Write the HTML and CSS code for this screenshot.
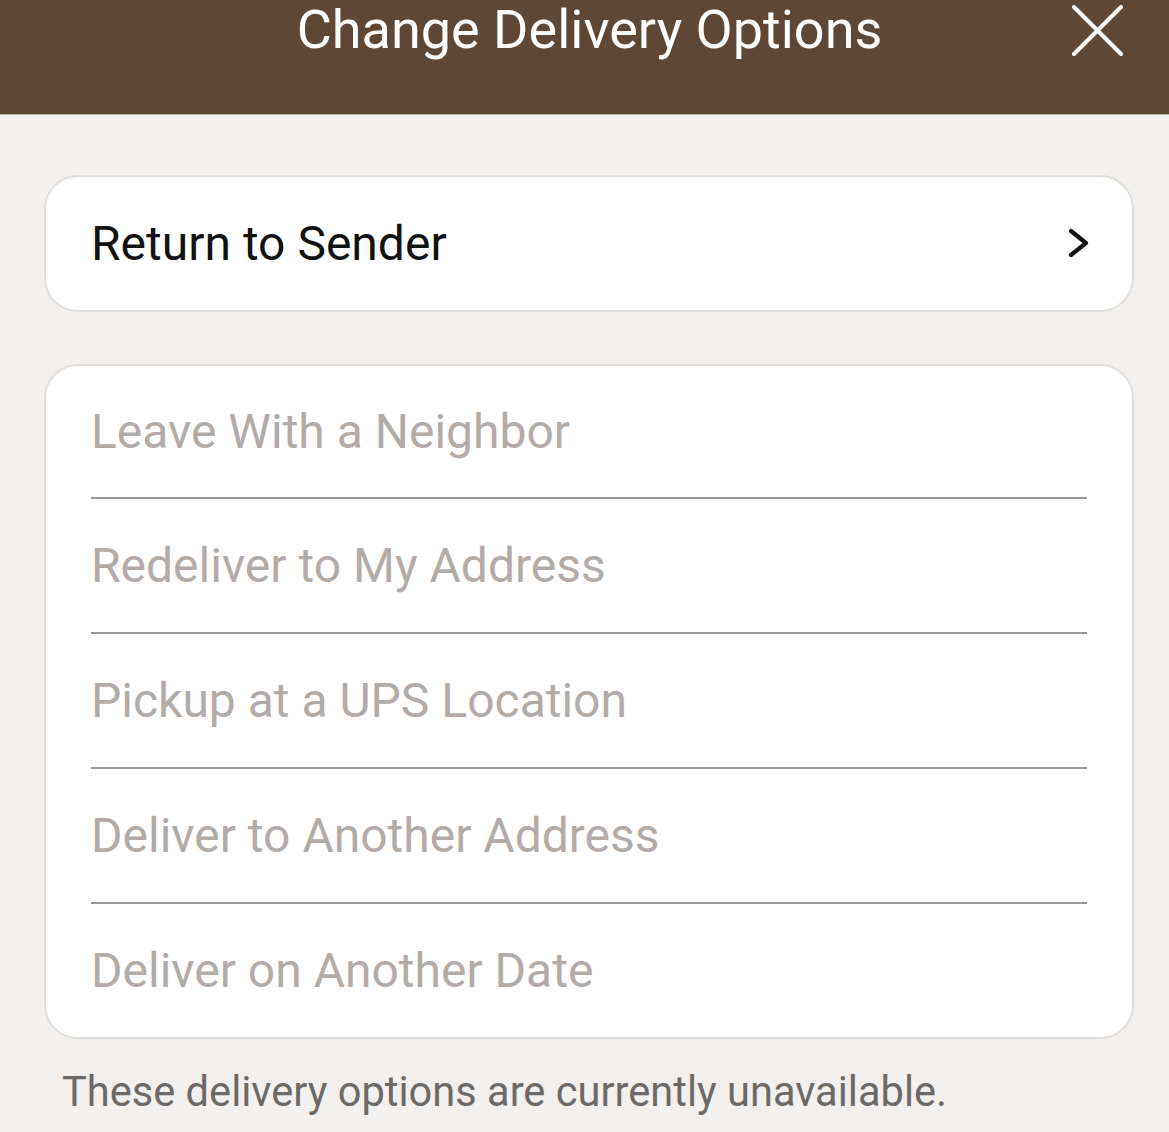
FILE: index.html
```html
<!DOCTYPE html>
<html lang="en">
<head>
    <meta charset="UTF-8">
    <meta name="viewport" content="width=device-width, initial-scale=1.0">
    <title>Change Delivery Options</title>
    <link rel="stylesheet" href="styles.css">
</head>
<body>
    <div id="header">
        <div id="headerTitle">Change Delivery Options</div>
        <button id="closeButton" aria-label="Close">
            <svg width="52" height="52" viewBox="0 0 52 52">
                <path d="M3 2 L50 49 M50 2 L3 49" stroke="#fff" stroke-width="4" stroke-linecap="round" fill="none"/>
            </svg>
        </button>
    </div>

    <div id="content">
        <div class="card">
            <div class="option active">
                <span>Return to Sender</span>
                <svg class="chevron" width="24" height="32" viewBox="0 0 24 32">
                    <path d="M5 3 L20 15 L5 27" stroke="#111" stroke-width="4.2" stroke-linecap="round" stroke-linejoin="round" fill="none"/>
                </svg>
            </div>
        </div>

        <div class="card">
            <div class="option disabled">Leave With a Neighbor</div>
            <div class="option disabled">Redeliver to My Address</div>
            <div class="option disabled">Pickup at a UPS Location</div>
            <div class="option disabled">Deliver to Another Address</div>
            <div class="option disabled">Deliver on Another Date</div>
        </div>

        <p id="note">These delivery options are currently unavailable.</p>
    </div>
</body>
</html>
```

FILE: styles.css
```css
body, html {
    margin: 0;
    padding: 0;
    height: 100%;
    overflow: hidden;
    font-family: Roboto, "Noto Sans", sans-serif;
    background-color: #f2f0ee;
}
#header {
    height: 114px;
    background-color: #5f4735;
    border-bottom: 1px solid #b9aea4;
    display: flex;
    justify-content: center;
    position: relative;
}
#headerTitle {
    color: #fff;
    font-size: 54px;
    line-height: 62px;
    margin-top: -1px;
    margin-left: 10px;
}
#closeButton {
    position: absolute;
    top: 5px;
    right: 46px;
    padding: 0;
    border: none;
    background: none;
    cursor: pointer;
}
#content {
    padding: 60px 35px 0 44px;
    display: flex;
    flex-direction: column;
    gap: 52px;
}
.card {
    background-color: #fff;
    border: 2px solid #e2deda;
    border-radius: 34px;
}
.option {
    height: 133px;
    display: flex;
    align-items: center;
    justify-content: space-between;
    margin: 0 45px 0 45px;
    font-size: 48px;
}
.option.active {
    color: #121212;
    margin-right: 42px;
}
.option.disabled {
    color: #b2aba7;
    border-bottom: 2px solid #9d9794;
}
.option.disabled:first-child {
    height: 131px;
}
.option.disabled:last-child {
    border-bottom: none;
}
#note {
    margin: -24px 0 0 18px;
    font-size: 41.6px;
    color: #6d6967;
}
```
